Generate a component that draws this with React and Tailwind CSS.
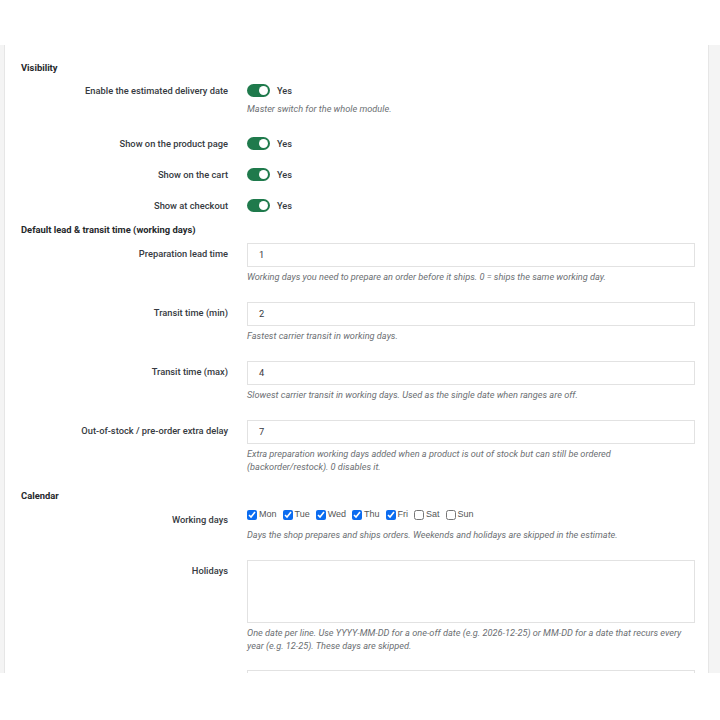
import React from 'react'

const font = { fontFamily: 'Roboto, "Liberation Sans", sans-serif' }

const Toggle = ({ label = 'Yes' }) => (
    <div className="flex items-center gap-[7px] h-[13px]">
        <span className="relative w-[23px] h-[13px] rounded-full bg-[#1f7a4c] flex items-center justify-end pr-[2px]">
            <span className="w-[9px] h-[9px] rounded-full bg-white" />
        </span>
        <span className="text-[9.2px] leading-[13px] font-medium text-[#363a41]">{label}</span>
    </div>
)

const Help = ({ children, className = '' }) => (
    <p className={"text-[9.2px] leading-[13px] italic text-[#6c6f73] " + className}>{children}</p>
)

const Label = ({ children, className = '' }) => (
    <div className={"w-[207px] shrink-0 text-right text-[9.3px] leading-[12px] font-medium text-[#363a41] " + className}>
        {children}
    </div>
)

const Heading = ({ children, className = '' }) => (
    <h3 className={"text-[9.4px] leading-[12px] font-bold text-[#25282b] " + className}>{children}</h3>
)

const NumberRow = ({ label, value, help, className = '' }) => (
    <div className={"flex gap-[19px] " + className}>
        <Label className="pt-[5px]">{label}</Label>
        <div className="flex-1">
            <div className="h-[24px] border border-[#e2e2e2] bg-white px-[11px] flex items-center text-[9.3px] text-[#363a41]">
                {value}
            </div>
            <Help className="mt-[3px]">{help}</Help>
        </div>
    </div>
)

const days = [
    ['Mon', true], ['Tue', true], ['Wed', true], ['Thu', true], ['Fri', true], ['Sat', false], ['Sun', false],
]

export default function App() {
    return (
        <div style={font} className="bg-white">
            <div className="h-[45px] bg-white" />
            <div className="h-[628px] overflow-hidden bg-[#f4f4f4] pl-[4px] pr-[11px]">
                <div className="min-h-[700px] bg-white border-x border-[#e6e6e6] pt-[17px] pl-[16px] pr-[13px]">
                    <Heading>Visibility</Heading>

                    <div className="flex gap-[19px] mt-[10px]">
                        <Label className="leading-[13px]">Enable the estimated delivery date</Label>
                        <div>
                            <Toggle />
                            <Help className="mt-[5px]">Master switch for the whole module.</Help>
                        </div>
                    </div>

                    <div className="flex gap-[19px] mt-[22px]">
                        <Label className="leading-[13px]">Show on the product page</Label>
                        <Toggle />
                    </div>
                    <div className="flex gap-[19px] mt-[18px]">
                        <Label className="leading-[13px]">Show on the cart</Label>
                        <Toggle />
                    </div>
                    <div className="flex gap-[19px] mt-[18px]">
                        <Label className="leading-[13px]">Show at checkout</Label>
                        <Toggle />
                    </div>

                    <Heading className="mt-[12px]">Default lead &amp; transit time (working days)</Heading>

                    <NumberRow className="mt-[7px]" label="Preparation lead time" value="1"
                        help="Working days you need to prepare an order before it ships. 0 = ships the same working day." />
                    <NumberRow className="mt-[19px]" label="Transit time (min)" value="2"
                        help="Fastest carrier transit in working days." />
                    <NumberRow className="mt-[19px]" label="Transit time (max)" value="4"
                        help="Slowest carrier transit in working days. Used as the single date when ranges are off." />
                    <NumberRow className="mt-[19px]" label="Out-of-stock / pre-order extra delay" value="7"
                        help={<>Extra preparation working days added when a product is out of stock but can still be ordered<br />(backorder/restock). 0 disables it.</>} />

                    <Heading className="mt-[17px]">Calendar</Heading>

                    <div className="flex gap-[19px] mt-[6px]">
                        <Label className="pt-[6px]">Working days</Label>
                        <div className="flex-1">
                            <div className="flex items-center h-[14px] gap-[6px]">
                                {days.map(([d, on]) => (
                                    <label key={d} className="flex items-center gap-[2px] text-[9px] text-[#555] cursor-pointer" style={{ fontFamily: '"Liberation Sans", Arial, sans-serif' }}>
                                        <input type="checkbox" defaultChecked={on} className="w-[10px] h-[10px] m-0 accent-[#0b6cf0]" />
                                        {d}
                                    </label>
                                ))}
                            </div>
                            <Help className="mt-[6px]">Days the shop prepares and ships orders. Weekends and holidays are skipped in the estimate.</Help>
                        </div>
                    </div>

                    <div className="flex gap-[19px] mt-[19px]">
                        <Label className="pt-[5px]">Holidays</Label>
                        <div className="flex-1">
                            <textarea className="block w-full h-[63px] border border-[#e2e2e2] bg-white resize-none outline-none" />
                            <Help className="mt-[3px]">One date per line. Use YYYY-MM-DD for a one-off date (e.g. 2026-12-25) or MM-DD for a date that recurs every year (e.g. 12-25). These days are skipped.</Help>
                        </div>
                    </div>

                    <div className="flex gap-[19px] mt-[18px]">
                        <Label />
                        <div className="flex-1 h-[24px] border border-[#e2e2e2] bg-white" />
                    </div>
                </div>
            </div>
        </div>
    )
}
